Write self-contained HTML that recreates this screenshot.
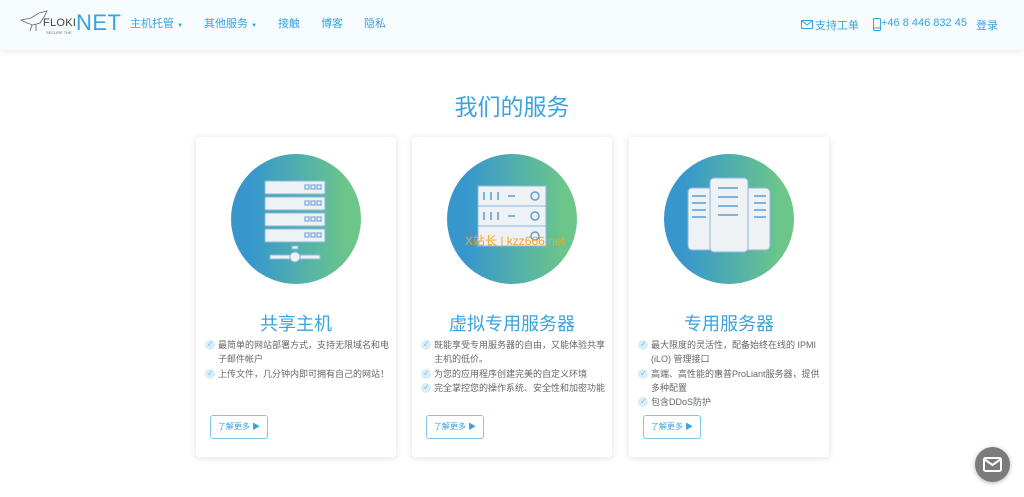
<!DOCTYPE html>
<html><head><meta charset="utf-8"><style>
*{margin:0;padding:0;box-sizing:border-box}
body{width:1024px;height:497px;background:#fff;font-family:"Liberation Sans","Noto Sans CJK SC",sans-serif;position:relative;overflow:hidden}
.hdr{position:absolute;left:0;top:0;width:1024px;height:50px;background:#f6fbfe;box-shadow:0 2px 6px rgba(0,0,0,.08)}
.nav{position:absolute;top:15px;font-size:11px;color:#3aa3dc}
h1{position:absolute;top:88px;width:1024px;text-align:center;font-size:23px;font-weight:normal;color:#3aa3dc}
.card{position:absolute;top:137px;width:200px;height:320px;background:#fff;box-shadow:0 1px 8px rgba(0,0,0,.13);border-radius:3px}
.circ{position:absolute;left:35px;top:17px;width:130px;height:130px;border-radius:50%;background:linear-gradient(90deg,#3797cd 15%,#6cc68a 90%)}
.circ svg{position:absolute;left:0;top:0}
.t{position:absolute;top:173px;width:200px;text-align:center;font-size:18px;color:#3aa3dc}
ul{position:absolute;top:201px;left:9px;right:6px;list-style:none;font-size:9px;color:#666;line-height:14.3px}
li{padding-left:13px;position:relative}
li:before{content:"✓";position:absolute;left:0;top:2px;width:10px;height:10px;border-radius:50%;background:#d8edf8;color:#5aaedc;font-size:6px;line-height:10px;text-align:center}
.btn{position:absolute;left:14px;top:278px;width:58px;height:24px;border:1px solid #7fc6ea;border-radius:3px;font-size:8px;color:#3aa3dc;line-height:22px;text-align:center}
</style></head><body>
<div class="hdr">
<svg style="position:absolute;left:19px;top:8px" width="30" height="26" viewBox="0 0 30 26"><path d="M2 12 L12 10 L20 5 L28 3 L25 9 L21 15 L14 17 L8 15 Z" fill="none" stroke="#666" stroke-width="0.8"/><path d="M13 17 L11 23 M17 16 L17 23" stroke="#666" stroke-width="0.8"/></svg>
<div style="position:absolute;left:43px;top:17px;font-size:11px;color:#444;letter-spacing:0.3px">FLOKI</div>
<div style="position:absolute;left:76px;top:10px;font-size:22px;color:#3aa3dc;letter-spacing:0.5px">NET</div>
<div style="position:absolute;left:46px;top:30px;font-size:4px;color:#777">SECURE THE</div>
<div class="nav" style="left:130px">主机托管 <span style="font-size:6px">▼</span></div>
<div class="nav" style="left:204px">其他服务 <span style="font-size:6px">▼</span></div>
<div class="nav" style="left:278px">接触</div>
<div class="nav" style="left:321px">博客</div>
<div class="nav" style="left:364px">隐私</div>
<svg style="position:absolute;left:801px;top:20px" width="12" height="9" viewBox="0 0 12 9"><rect x="0.5" y="0.5" width="11" height="8" fill="none" stroke="#3aa3dc"/><path d="M0.5 0.5l5.5 4.5 5.5-4.5" fill="none" stroke="#3aa3dc"/></svg>
<div class="nav" style="left:815px;top:17px">支持工单</div>
<svg style="position:absolute;left:873px;top:18px" width="8" height="13" viewBox="0 0 8 13"><rect x="0.5" y="0.5" width="7" height="12" rx="1" fill="none" stroke="#3aa3dc"/><path d="M0.5 10h7" stroke="#3aa3dc"/></svg>
<div class="nav" style="left:881px;top:17px">+46 8 446 832 45</div>
<div class="nav" style="left:976px;top:17px">登录</div>
</div>
<h1>我们的服务</h1>

<div class="card" style="left:196px">
<div class="circ"><svg width="130" height="130" viewBox="0 0 130 130" fill="#eef2f4" stroke="#8ab8e0" stroke-width="1">
<rect x="34" y="27" width="60" height="13" rx="1"/><rect x="34" y="43" width="60" height="13" rx="1"/><rect x="34" y="59" width="60" height="13" rx="1"/><rect x="34" y="75" width="60" height="13" rx="1"/>
<g fill="none" stroke="#5a9ed8"><rect x="74" y="31" width="4" height="4"/><rect x="80" y="31" width="4" height="4"/><rect x="86" y="31" width="4" height="4"/><rect x="74" y="47" width="4" height="4"/><rect x="80" y="47" width="4" height="4"/><rect x="86" y="47" width="4" height="4"/><rect x="74" y="63" width="4" height="4"/><rect x="80" y="63" width="4" height="4"/><rect x="86" y="63" width="4" height="4"/><rect x="74" y="79" width="4" height="4"/><rect x="80" y="79" width="4" height="4"/><rect x="86" y="79" width="4" height="4"/></g>
<rect x="61" y="92" width="6" height="3"/><rect x="39" y="101" width="20" height="4"/><rect x="69" y="101" width="20" height="4"/><circle cx="64" cy="103" r="5"/></svg></div>
<div class="t">共享主机</div>
<ul><li>最简单的网站部署方式，支持无限域名和电子邮件帐户</li><li>上传文件，几分钟内即可拥有自己的网站！</li></ul>
<div class="btn">了解更多 ▶</div></div>

<div class="card" style="left:412px">
<div class="circ"><svg width="130" height="130" viewBox="0 0 130 130" fill="#eef2f4" stroke="#8ab8e0" stroke-width="1">
<rect x="31" y="32" width="68" height="20"/><rect x="31" y="52" width="68" height="20"/><rect x="31" y="72" width="68" height="20"/>
<g fill="none" stroke="#5a9ed8" stroke-width="1.5"><path d="M37 38v8M44 38v8M51 38v8M61 42h7M37 58v8M44 58v8M51 58v8M61 62h7"/><circle cx="88" cy="42" r="4"/><circle cx="88" cy="62" r="4"/><circle cx="88" cy="82" r="4"/></g></svg>
<div style="position:absolute;left:18px;top:78px;font-size:12px;color:#f5a623;white-space:nowrap">X站长 | kzz666.net</div></div>
<div class="t">虚拟专用服务器</div>
<ul><li>既能享受专用服务器的自由，又能体验共享主机的低价。</li><li>为您的应用程序创建完美的自定义环境</li><li>完全掌控您的操作系统、安全性和加密功能</li></ul>
<div class="btn">了解更多 ▶</div></div>

<div class="card" style="left:629px">
<div class="circ"><svg width="130" height="130" viewBox="0 0 130 130" fill="#eef2f4" stroke="#8ab8e0" stroke-width="1">
<rect x="24" y="34" width="26" height="62" rx="4"/><rect x="80" y="34" width="26" height="62" rx="4"/><rect x="46" y="24" width="38" height="74" rx="4"/>
<g stroke="#5a9ed8" stroke-width="1.5"><path d="M28 42h14M28 49h14M28 56h14M28 63h14M90 42h12M90 49h12M90 56h12M90 63h12M54 34h20M54 43h20M54 52h20M54 61h20"/></g></svg></div>
<div class="t">专用服务器</div>
<ul><li>最大限度的灵活性，配备始终在线的 IPMI (iLO) 管理接口</li><li>高端、高性能的惠普ProLiant服务器，提供多种配置</li><li>包含DDoS防护</li></ul>
<div class="btn">了解更多 ▶</div></div>

<div style="position:absolute;left:975px;top:447px;width:35px;height:35px;border-radius:50%;background:#7b7b7b;box-shadow:0 1px 4px rgba(0,0,0,.3)">
<svg width="35" height="35" viewBox="0 0 35 35"><rect x="9" y="11" width="17" height="13" rx="1.5" fill="none" stroke="#fff" stroke-width="2"/><path d="M9 12l8.5 6 8.5-6" fill="none" stroke="#fff" stroke-width="2"/></svg></div>
</body></html>
